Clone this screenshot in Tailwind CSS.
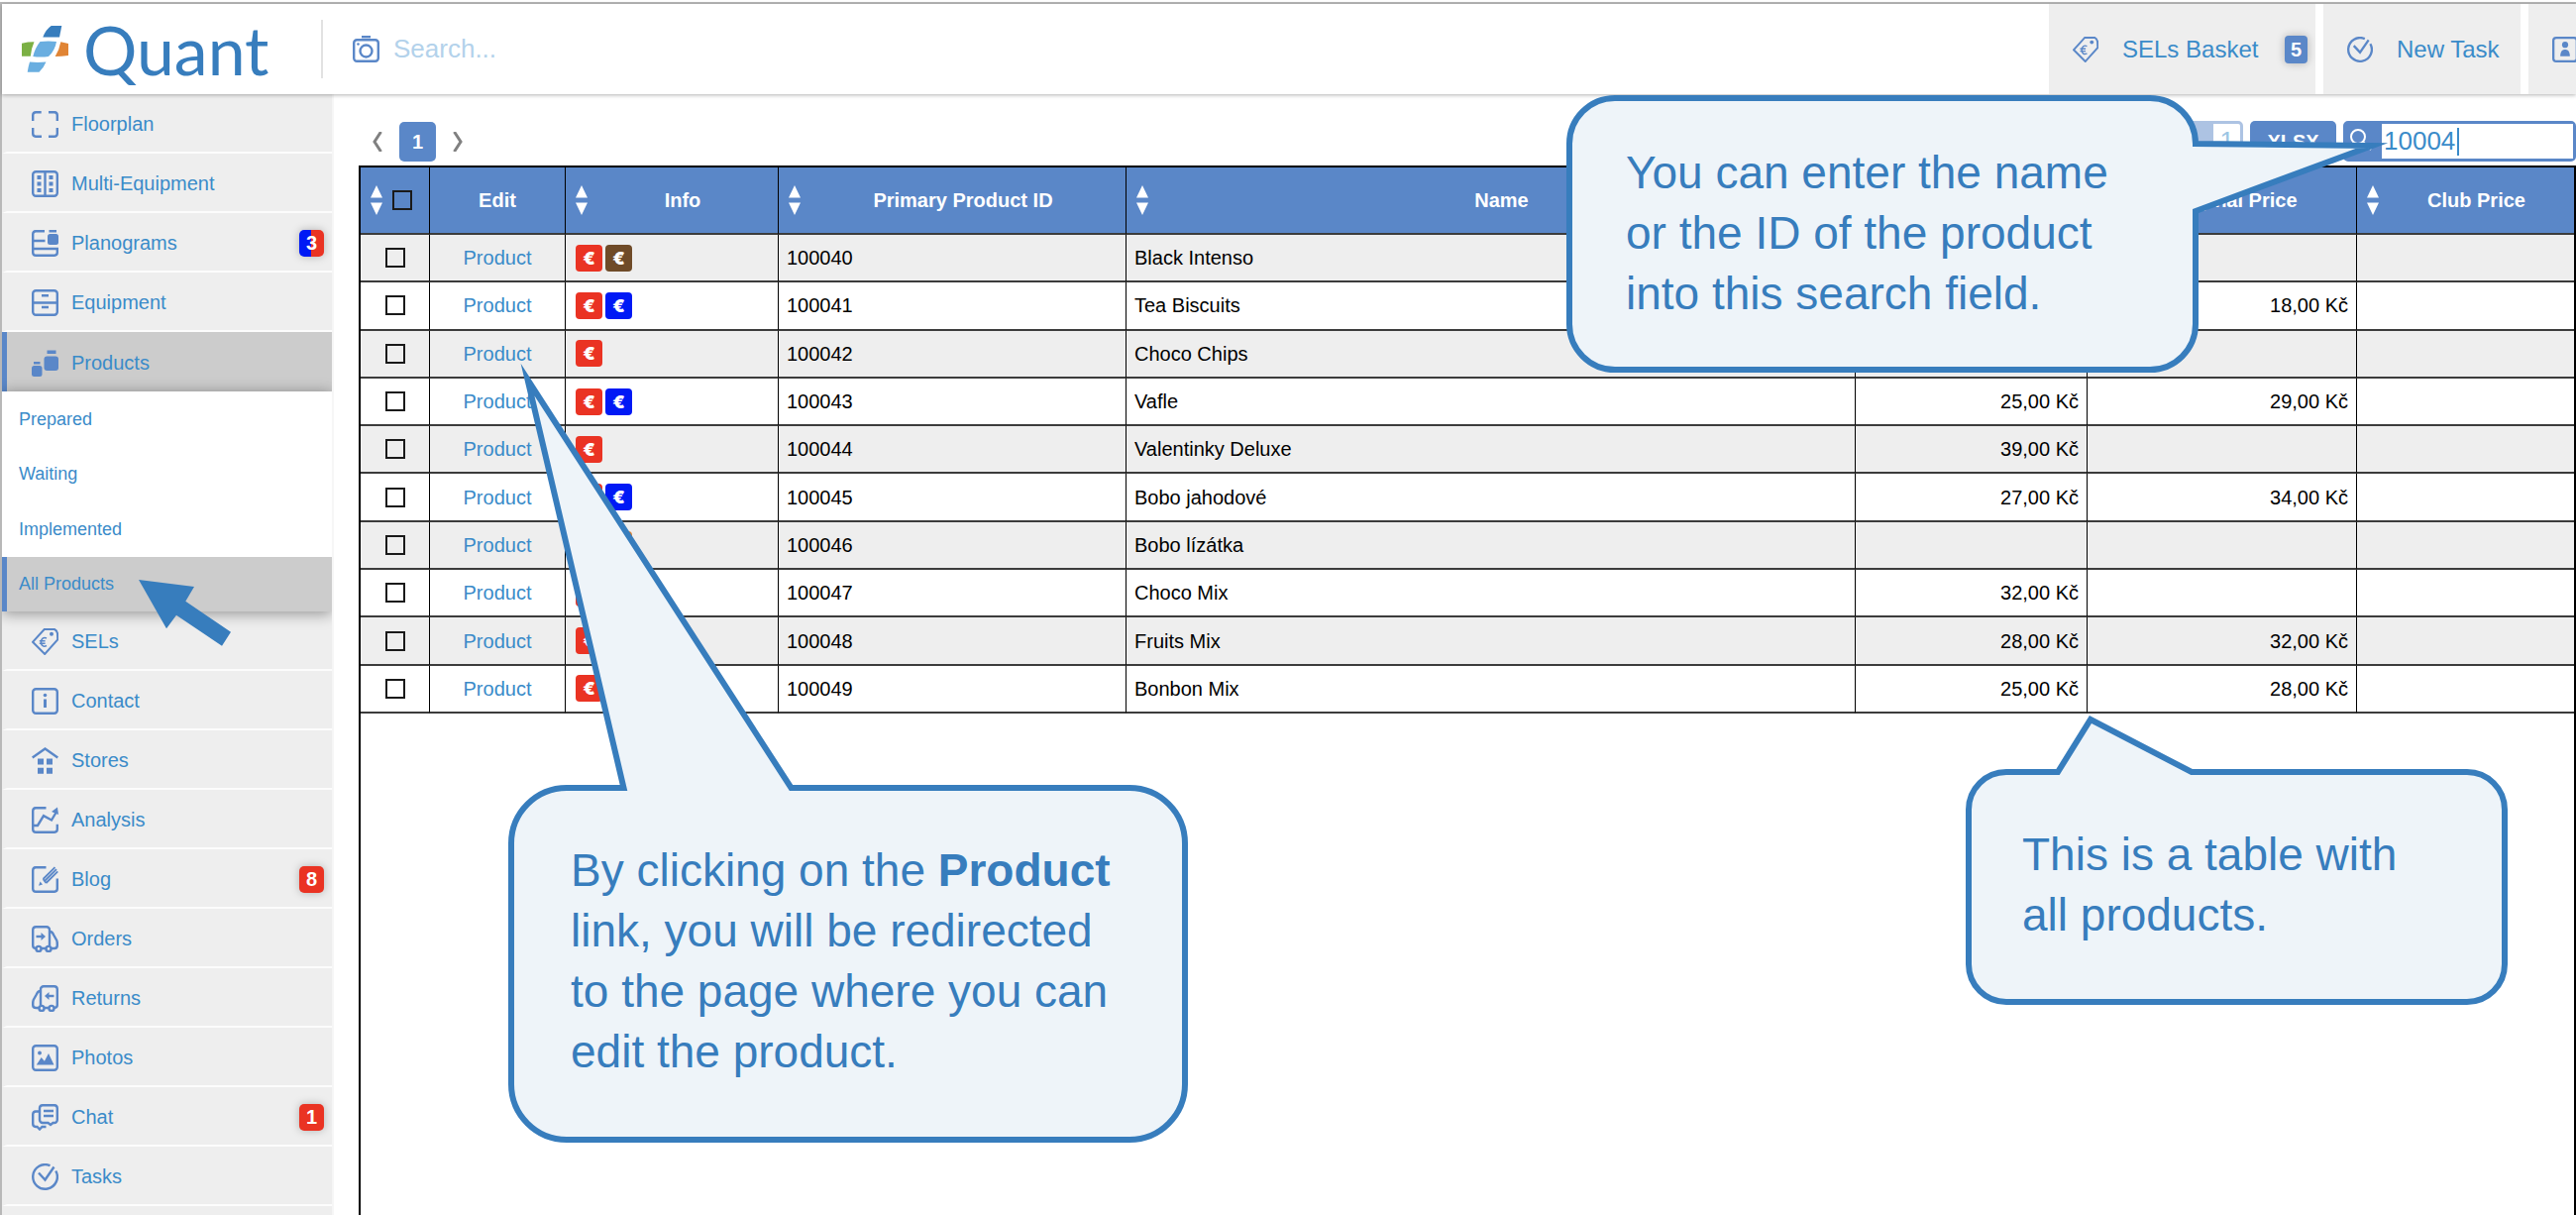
<!DOCTYPE html>
<html lang="en">
<head>
<meta charset="utf-8">
<meta name="viewport" content="width=device-width, initial-scale=1">
<title>Quant – All Products</title>
<script src="https://cdn.jsdelivr.net/npm/@tailwindcss/browser@4"></script>
</head>
<body class="bg-white font-['Liberation_Sans',Arial,sans-serif] text-xl text-black">
<!-- Shared icon symbols, drawn on a 27 unit grid -->
<svg class="hidden" aria-hidden="true">
  <symbol id="i-floor" viewBox="0 0 27 27"><path d="M1.200 10V4a3 3 0 0 1 3-2.800h5.500M17 1.200h6a3 3 0 0 1 2.800 3V10M25.800 17v6a3 3 0 0 1-3 2.800H17M10 25.800H4a3 3 0 0 1-2.800-3V17"/></symbol>
  <symbol id="i-multi" viewBox="0 0 27 27"><rect x="1.200" y="1.200" width="24.600" height="24.600" rx="3"/><path d="M13.500 1v25"/><path fill="currentColor" stroke="none" d="M5.500 5h4v4h-4zM5.500 11.500h4v4h-4zM5.500 18h4v4h-4zM17.500 5h4v4h-4zM17.500 11.500h4v4h-4zM17.500 18h4v4h-4z"/></symbol>
  <symbol id="i-plano" viewBox="0 0 27 27"><path d="M13 1.200H4a3 3 0 0 0-2.800 3V23a3 3 0 0 0 3 2.800H23a3 3 0 0 0 2.800-3V19H1.200M1.200 11h12.300"/><g fill="currentColor" stroke="none"><rect x="17.500" y="0" width="7.500" height="2.500"/><rect x="16" y="4" width="11" height="11" rx="2.500"/></g></symbol>
  <symbol id="i-equip" viewBox="0 0 27 27"><rect x="1.200" y="1.200" width="24.600" height="24.600" rx="3"/><path d="M1 13.500h25M10 6.200h7M10 18h7"/></symbol>
  <symbol id="i-prod" viewBox="0 0 27 27"><g fill="currentColor" stroke="none"><rect x="12.500" y="6.500" width="14.500" height="14.500" rx="3"/><rect x="15.500" y="0.500" width="9" height="3.500"/><rect x="0" y="16" width="10.500" height="11" rx="2.500"/><rect x="2" y="12" width="6.500" height="2.500"/></g></symbol>
  <symbol id="i-tag" viewBox="0 0 27 27"><path stroke-width="2" d="M12.700 1H23c1.500.7 2.500 2 3 4l.2 6.500L13.200 26 1 13.800z"/><circle cx="20" cy="5.800" r="2" fill="currentColor" stroke="none"/><path stroke-width="1.500" d="M15 10c-3-1.500-5.500.5-5.500 4s2.500 5.200 5.500 3.500M7.800 12.800h5.800M7.800 15.200h5.800"/></symbol>
  <symbol id="i-info" viewBox="0 0 27 27"><rect x="1.200" y="1.200" width="24.600" height="24.600" rx="3"/><circle cx="13.500" cy="7.500" r="1.800" fill="currentColor" stroke="none"/><path stroke-width="3" d="M13.500 11.500v8.500"/></symbol>
  <symbol id="i-store" viewBox="0 0 27 27"><path d="M.7 10.500 13.500 1.500 26.300 10.500"/><path fill="currentColor" stroke="none" d="M6 11.500h6v6H6zM15 11.500h6v6h-6zM6 20.700h6v6H6zM15 20.700h6v6h-6z"/></symbol>
  <symbol id="i-chart" viewBox="0 0 27 27"><path d="M14.500 1.200H4a3 3 0 0 0-2.800 3V23a3 3 0 0 0 3 2.800H23a3 3 0 0 0 2.800-3v-5M2 19h4l6-9.800 8 4.300 4.500-7.500"/><path fill="currentColor" stroke="none" d="M26 .5 27 8l-7-3z"/></symbol>
  <symbol id="i-blog" viewBox="0 0 27 27"><path d="M14.500 1.200H4a3 3 0 0 0-2.800 3V23a3 3 0 0 0 3 2.800H23a3 3 0 0 0 2.800-3V12.500"/><path stroke-width="1.800" d="M11.500 13 23.500 1.200M13 15 25 3.200M14.500 17 26.300 5.400M11.500 13l3 4"/><path fill="currentColor" stroke="none" d="m8.500 15.500 2.500 3-4 1.200z"/></symbol>
  <symbol id="i-truck" viewBox="0 0 27 27"><path d="M4 23a3 3 0 0 1-2.800-3V4a3 3 0 0 1 3-2.800H15a3 3 0 0 1 3 3v16.300M9.500 23h5M18 6c2.500 0 3 1 4.500 4l2.800 5c.5 1 .5 3 .5 5 0 2-1 3-3 3H20"/><circle cx="7" cy="23.400" r="2.500"/><circle cx="17" cy="23.400" r="2.500"/><path d="M4.500 11h7"/><path fill="currentColor" stroke="none" d="M9.500 7v8l4.500-4z"/></symbol>
  <symbol id="i-photo" viewBox="0 0 27 27"><rect x="1.200" y="1.200" width="24.600" height="24.600" rx="3"/><circle cx="8" cy="8.500" r="1.900" fill="currentColor" stroke="none"/><path fill="currentColor" stroke="none" d="M4.800 20.500 9.700 13l3.200 3.800L17 9l5.500 11.500z"/></symbol>
  <symbol id="i-chat" viewBox="0 0 27 27"><path d="M11 1.200h12a3 3 0 0 1 2.800 3V16a3 3 0 0 1-3 3h-1.300L19 21l-2.500-2H11a3 3 0 0 1-3-3V4a3 3 0 0 1 3-2.800zM12 7h10M12 12h10M8 7.500H4a3 3 0 0 0-2.800 3V20A3 3 0 0 0 4 23h1.500L8 25.500 10.500 23h4"/></symbol>
  <symbol id="i-task" viewBox="0 0 27 27"><path d="M18.500 2.200A12.300 12.300 0 1 0 24.300 7.500"/><path d="M7 9.500l6.500 7L22.500 3.500"/></symbol>
  <symbol id="i-camera" viewBox="0 0 27 27"><rect x="1.200" y="4.200" width="24.600" height="21.600" rx="3"/><path d="M9 1.200h9"/><circle cx="13.500" cy="15.500" r="6"/><circle cx="5.500" cy="8.500" r="1.300" fill="currentColor" stroke="none"/></symbol>
  <symbol id="i-person" viewBox="0 0 27 27"><rect x="1.200" y="1.200" width="24.600" height="24.600" rx="3"/><circle cx="13.500" cy="8.500" r="3.200" fill="currentColor" stroke="none"/><path fill="currentColor" stroke="none" d="M8.500 20.500c0-5 2-7 5-7s5 2 5 7z"/></symbol>
  <symbol id="i-sort" viewBox="0 0 12 30"><path fill="currentColor" stroke="none" d="M6 0l6 12.500H0zM0 17.500h12L6 30z"/></symbol>
</svg>

<div class="relative h-screen overflow-hidden pt-0.5">
  <div class="flex h-full flex-col border-t-2 border-l-2 border-[#b8b8b8]">

    <header class="relative z-10 flex h-[91px] shrink-0 items-stretch bg-white shadow-[0_1px_4px_rgba(0,0,0,0.3)]">
      <a href="#" class="my-4 flex w-[324px] items-center border-r-2 border-[#e2e2e2] pl-5" aria-label="Quant home">
        <svg class="h-12 w-12 shrink-0" viewBox="0 0 48 48" aria-hidden="true">
          <path fill="#377dbd" d="M29.700 0H40.300L38 11.500H21.300Q24 4 29.700 0z"/>
          <path fill="#6aaee0" d="M18.500 16Q27 15 35 16 33.500 25 27 31 19 32 11.300 31 13.500 22 18.500 16zM8 36.500Q16 37.300 24.500 36.500 22 42.500 17.500 46.800H5.700Q6.500 41 8 36.500z"/>
          <path fill="#7bb044" d="M0 17.700Q6 16.300 12.500 16.300 9.500 23 8.800 30.700H0z"/>
          <path fill="#e08434" d="M39.300 16.300 47 18V30Q40 31 33.700 31 38 24 39.300 16.300z"/>
        </svg>
        <span class="pl-3.5 font-[Lato,sans-serif] text-[68px] leading-none text-[#377dbd]">Quant</span>
      </a>
      <label class="flex flex-1 items-center gap-3.5 pl-[30px] text-[#5a87c8]">
        <svg class="size-[27px] fill-none stroke-current stroke-[2.4]" aria-hidden="true"><use href="#i-camera"/></svg>
        <input type="text" placeholder="Search..." aria-label="Search" class="min-w-0 flex-1 bg-transparent text-[26px] text-[#3a8bc9] outline-none placeholder:text-[#b3d2eb]">
      </label>
      <nav class="flex gap-2 text-[24px] text-[#3a8bc9]" aria-label="Shortcuts">
        <a href="#" class="flex w-[269px] items-center bg-[#eee] pr-2 pl-6">
          <svg class="size-[26px] fill-none stroke-[#5a87c8] stroke-[2.4] text-[#5a87c8]" aria-hidden="true"><use href="#i-tag"/></svg>
          <span class="flex-1 pl-6">SELs Basket</span>
          <span class="rounded bg-[#5a87c8] px-1.5 text-xl leading-7 font-bold text-white shadow-[0_0_8px_rgba(0,0,0,0.25)]">5</span>
        </a>
        <a href="#" class="flex w-[199px] items-center bg-[#eee] pl-6">
          <svg class="size-[26px] fill-none stroke-[#5a87c8] stroke-[2.4]" aria-hidden="true"><use href="#i-task"/></svg>
          <span class="pl-6">New Task</span>
        </a>
        <a href="#" class="flex w-12 items-center overflow-hidden bg-[#eee] pl-6" aria-label="Profile">
          <svg class="size-[26px] shrink-0 fill-none stroke-[#5a87c8] stroke-[2.4] text-[#5a87c8]" aria-hidden="true"><use href="#i-person"/></svg>
        </a>
      </nav>
    </header>

    <div class="flex min-h-0 flex-1">
      <aside class="w-[335px] shrink-0 overflow-hidden border-r-2 border-[#f6f6f6] bg-[#eee] text-[#3a8bc9]">
        <nav id="menu" aria-label="Main"></nav>
      </aside>

      <main class="flex min-w-0 flex-1 flex-col pt-[27px] pl-[25px]">
        <div class="mb-1 flex h-[41px] shrink-0 items-stretch justify-between">
          <div class="flex items-center gap-[17px] pl-3.5">
            <button type="button" aria-label="Previous page" class="text-[#808080]"><svg class="h-5 w-2.5 fill-none stroke-current stroke-[3]" viewBox="0 0 10 20"><path d="M8.500 0 2 10l6.500 10"/></svg></button>
            <button type="button" class="h-10 w-[37px] rounded-[5px] bg-[#5a87c8] font-bold text-white">1</button>
            <button type="button" aria-label="Next page" class="text-[#808080]"><svg class="h-5 w-2.5 fill-none stroke-current stroke-[3]" viewBox="0 0 10 20"><path d="M1.500 0 8 10 1.500 20"/></svg></button>
          </div>
          <div class="flex gap-[7px]">
            <input type="text" value="1" aria-label="Page" class="w-20 rounded-[5px] border-[3px] border-l-[50px] border-[#adc3e3] bg-white pr-1.5 text-right text-[26px] text-[#9cc5e4] outline-none">
            <button type="button" class="w-[87px] rounded-[5px] bg-[#5a87c8] font-bold text-white">XLSX</button>
            <label class="flex w-[235px] items-stretch rounded-[5px] border-[3px] border-[#5a87c8] bg-[#5a87c8]">
              <svg class="mt-1 ml-1 h-6 w-8 shrink-0 fill-none stroke-white stroke-2" viewBox="0 0 32 24" aria-hidden="true"><circle cx="8" cy="9" r="7"/><path d="m13 14 8 8"/></svg>
              <span class="flex flex-1 items-center bg-white pl-0.5">
                <input type="text" value="10004" aria-label="Search products" class="w-[74px] bg-transparent text-[26px] text-[#3a8bc9] outline-none">
                <span class="h-7 w-0.5 bg-[#3a8bc9]"></span>
              </span>
            </label>
          </div>
        </div>

        <div class="min-h-0 flex-1 border-2 border-b-0 border-black">
          <table class="h-[551px] w-full table-fixed border-separate border-spacing-0">
            <colgroup>
              <col class="w-[70px]"><col class="w-[137px]"><col class="w-[215px]"><col class="w-[351px]"><col><col class="w-[234px]"><col class="w-[272px]"><col class="w-[219px]">
            </colgroup>
            <thead class="bg-[#5a87c8] text-white">
              <tr id="head" class="h-[68px]"></tr>
            </thead>
            <tbody id="rows"></tbody>
          </table>
        </div>
      </main>
    </div>
  </div>

  <!-- Guide overlays -->
  <svg class="absolute top-[585px] left-[140px] h-[67px] w-[94px] fill-[#377dbd]" viewBox="0 0 94 67" aria-hidden="true"><path d="M0 0 56 7 47.300 21.700 93 52.700 84 66.700 38 35.700 28 49.300z"/></svg>

  <div class="absolute top-[96px] right-[381px] z-20 h-[280px] w-[638px] pt-12 pl-[60px] text-[46px] leading-[61px] whitespace-nowrap text-[#377dbd]">
    <svg class="absolute inset-0 h-full w-full overflow-visible fill-[#eef4f9] stroke-[#377dbd] stroke-[6]" viewBox="0 0 638 280" aria-hidden="true"><path stroke-miterlimit="20" d="M49 3H589A46 46 0 0 1 635 49L813 51 635 117V231A46 46 0 0 1 589 277H49A46 46 0 0 1 3 231V49A46 46 0 0 1 49 3z"/></svg>
    <p class="relative">You can enter the name<br>or the ID of the product<br>into this search field.</p>
  </div>

  <div class="absolute top-[792px] left-[513px] z-20 h-[361px] w-[686px] pt-14 pl-[63px] text-[46px] leading-[61px] whitespace-nowrap text-[#377dbd]">
    <svg class="absolute inset-0 h-full w-full overflow-visible fill-[#eef4f9] stroke-[#377dbd] stroke-[6]" viewBox="0 0 686 361" aria-hidden="true"><path stroke-miterlimit="20" d="M59 3H116.500L19.500-409 285.500 3H627A56 56 0 0 1 683 59V302A56 56 0 0 1 627 358H59A56 56 0 0 1 3 302V59A56 56 0 0 1 59 3z"/></svg>
    <p class="relative">By clicking on the <b>Product</b><br>link, you will be redirected<br>to the page where you can<br>edit the product.</p>
  </div>

  <div class="absolute top-[776px] right-[69px] z-20 h-[238px] w-[547px] pt-[56px] pl-[57px] text-[46px] leading-[61px] whitespace-nowrap text-[#377dbd]">
    <svg class="absolute inset-0 h-full w-full overflow-visible fill-[#eef4f9] stroke-[#377dbd] stroke-[6]" viewBox="0 0 547 238" aria-hidden="true"><path d="M41 3H93L126-50 228 3H506A38 38 0 0 1 544 41V197A38 38 0 0 1 506 235H41A38 38 0 0 1 3 197V41A38 38 0 0 1 41 3z"/></svg>
    <p class="relative">This is a table with<br>all products.</p>
  </div>
</div>

<script>
  const badge = (n, bg) => `<span class="w-[25px] rounded-[5px] ${bg} text-center leading-[27px] font-bold text-white shadow-[0_0_8px_rgba(0,0,0,0.25)]">${n}</span>`;
  const red = 'bg-[#ea3323]';
  const split = 'bg-[linear-gradient(90deg,#0019f5_50%,#ea3323_50%)]';
  const item = ([icon, label, extra = '', state = 'border-l-[#eee] border-b-2 border-b-[#fcfcfc]']) => `
    <a href="#" class="flex h-[60px] items-center border-l-[5px] pt-0.5 pr-2 pl-[25px] ${state}">
      <svg class="size-[27px] fill-none stroke-[#5a87c8] stroke-[2.4] text-[#5a87c8] ${label === 'Returns' ? '-scale-x-100' : ''}" aria-hidden="true"><use href="#${icon}"/></svg>
      <span class="flex-1 pl-[13px]">${label}</span>${extra}
    </a>`;
  const sub = (label, state = 'border-l-white') => `<a href="#" class="flex flex-1 items-center border-l-[5px] pl-3 text-lg ${state}">${label}</a>`;
  const active = 'border-l-[#5a87c8] bg-[#ccc]';
  document.getElementById('menu').innerHTML =
    [['i-floor', 'Floorplan'], ['i-multi', 'Multi-Equipment'], ['i-plano', 'Planograms', badge(3, split)], ['i-equip', 'Equipment'], ['i-prod', 'Products', '', active]].map(item).join('') +
    `<div class="relative flex h-[222px] flex-col bg-white shadow-[0_2px_14px_rgba(0,0,0,0.4)]">${sub('Prepared')}${sub('Waiting')}${sub('Implemented')}${sub('All Products', active)}</div>` +
    [['i-tag', 'SELs'], ['i-info', 'Contact'], ['i-store', 'Stores'], ['i-chart', 'Analysis'], ['i-blog', 'Blog', badge(8, red)], ['i-truck', 'Orders'], ['i-truck', 'Returns'], ['i-photo', 'Photos'], ['i-chat', 'Chat', badge(1, red)], ['i-task', 'Tasks']].map(item).join('');

  const sort = '<svg class="h-[30px] w-3 shrink-0" aria-hidden="true"><use href="#i-sort"/></svg>';
  const box = (size, label) => `<input type="checkbox" aria-label="${label}" class="block size-5 appearance-none border-2 border-[#1a1a1a] ${size}">`;
  const line = 'border-b-2 border-b-[#3c3c3c] border-r border-r-black last:border-r-0';
  document.getElementById('head').innerHTML =
    ['', 'Edit', 'Info', 'Primary Product ID', 'Name', null, 'Original Price', 'Club Price'].map(t =>
      `<th scope="col" class="${line} p-0">` +
      (t === '' ? `<div class="flex items-center gap-2.5 pl-2.5">${sort}${box('', 'Select all')}</div>`
        : t === 'Edit' ? t
        : `<div class="flex items-center pl-2.5">${sort}<span class="flex-1">${t ?? ''}</span></div>`) + '</th>').join('');

  const colours = { r: 'bg-[#ea3323]', b: 'bg-[#0019f5]', n: 'bg-[#6f4b28]', o: 'bg-[#e08434]' };
  const products = [
    ['Black Intenso', 'rn', '', ''], ['Tea Biscuits', 'rb', '', '18,00 Kč'], ['Choco Chips', 'r', '', ''],
    ['Vafle', 'rb', '25,00 Kč', '29,00 Kč'], ['Valentinky Deluxe', 'r', '39,00 Kč', ''], ['Bobo jahodové', 'rb', '27,00 Kč', '34,00 Kč'],
    ['Bobo lízátka', 'ro', '', ''], ['Choco Mix', 'r', '32,00 Kč', ''], ['Fruits Mix', 'r', '28,00 Kč', '32,00 Kč'], ['Bonbon Mix', 'r', '25,00 Kč', '28,00 Kč']];
  document.getElementById('rows').innerHTML = products.map(([name, info, price, original], i) => `
    <tr class="odd:bg-[#eee]">
      <td class="${line} p-0">${box('mx-auto', 'Select ' + name)}</td>
      <td class="${line} p-0 text-center"><a href="#" class="text-[#3a8bc9]">Product</a></td>
      <td class="${line} py-0 pr-0 pl-2.5"><div class="flex gap-[3px]">${[...info].map(c => `<span class="size-[27px] rounded ${colours[c]} text-center font-[Inter,sans-serif] text-lg leading-[27px] font-black text-white">€</span>`).join('')}</div></td>
      <td class="${line} py-0 pr-2 pl-2">${100040 + i}</td>
      <td class="${line} py-0 pr-2 pl-2">${name}</td>
      <td class="${line} py-0 pr-2 text-right">${price}</td>
      <td class="${line} py-0 pr-2 text-right">${original}</td>
      <td class="${line} p-0"></td>
    </tr>`).join('');
</script>
</body>
</html>
